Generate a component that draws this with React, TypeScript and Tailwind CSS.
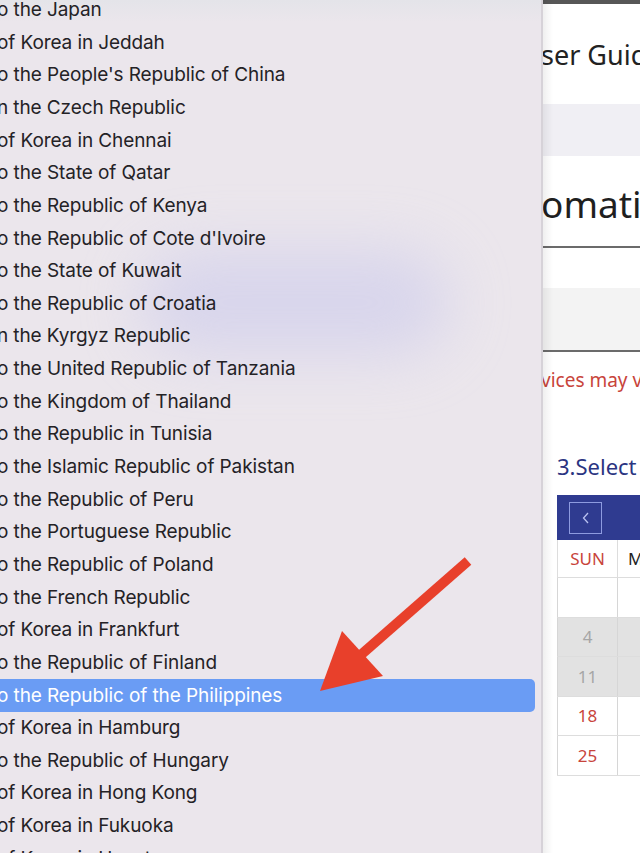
import React from "react";

const items: string[] = [
  "o the Japan",
  "of Korea in Jeddah",
  "o the People's Republic of China",
  "n the Czech Republic",
  "of Korea in Chennai",
  "o the State of Qatar",
  "o the Republic of Kenya",
  "o the Republic of Cote d'Ivoire",
  "o the State of Kuwait",
  "o the Republic of Croatia",
  "n the Kyrgyz Republic",
  "o the United Republic of Tanzania",
  "o the Kingdom of Thailand",
  "o the Republic in Tunisia",
  "o the Islamic Republic of Pakistan",
  "o the Republic of Peru",
  "o the Portuguese Republic",
  "o the Republic of Poland",
  "o the French Republic",
  "of Korea in Frankfurt",
  "o the Republic of Finland",
  "o the Republic of the Philippines",
  "of Korea in Hamburg",
  "o the Republic of Hungary",
  "of Korea in Hong Kong",
  "of Korea in Fukuoka",
  "of Korea in Houston",
];

const SELECTED = 21;

function Menu() {
  return (
    <div className="relative w-[543px] shrink-0 h-full overflow-hidden bg-[#ebe6ec] border-r-2 border-r-[#d6d2d8]">
      <div className="absolute left-[140px] top-[250px] w-[310px] h-[105px] rounded-full bg-[#c9c8ec] opacity-55 blur-[30px]" />
      <div className="absolute left-0 top-0 w-full h-[22px] bg-gradient-to-b from-[#e4e4e9] to-[#ebe6ec]" />
      <div className="relative mt-[-6px] flex flex-col">
        {items.map((t, i) => (
          <div
            key={i}
            className={
              i === SELECTED
                ? "h-[32.65px] flex items-center mr-[6px] rounded-r-[5px] bg-[#6a9cf4] text-white"
                : "h-[32.65px] flex items-center mr-[6px] text-[#242226]"
            }
          >
            <span className="ml-[-3px] whitespace-nowrap text-[19px] font-normal font-['Inter',sans-serif] tracking-[-0.1px]">
              {t}
            </span>
          </div>
        ))}
      </div>
    </div>
  );
}

function Calendar() {
  const rows = [
    { label: "", grey: false },
    { label: "4", grey: true },
    { label: "11", grey: true },
    { label: "18", grey: false },
    { label: "25", grey: false },
  ];
  return (
    <div className="ml-[14px] w-[200px]">
      <div className="h-[45px] bg-[#2f3b90] flex items-center pl-[12px]">
        <div className="w-[33px] h-[32px] border border-[#8e9be0] flex items-center justify-center">
          <svg width="12" height="14" viewBox="0 0 12 14" fill="none">
            <path d="M8 2 L3.5 7 L8 12" stroke="#b9c2f0" strokeWidth="1.3" />
          </svg>
        </div>
      </div>
      <div className="flex h-[38px] border-b border-[#dddddd]">
        <div className="w-[61px] border-l border-r border-[#dddddd] flex items-center justify-center text-[17px] text-[#c8443b] font-['Noto_Sans',sans-serif]">
          SUN
        </div>
        <div className="flex-1 flex items-center pl-[10px] text-[17px] text-[#222] font-['Noto_Sans',sans-serif]">
          MON
        </div>
      </div>
      {rows.map((r, i) => (
        <div key={i} className={"flex h-[39.5px] border-b border-[#dddddd] " + (r.grey ? "bg-[#e2e2e2]" : "bg-white")}>
          <div
            className={
              "w-[61px] border-l border-r border-[#d6d6d6] flex items-center justify-center text-[17px] font-['Noto_Sans',sans-serif] " +
              (r.grey ? "text-[#a6a6a6]" : "text-[#c8443b]")
            }
          >
            {r.label}
          </div>
          <div className="flex-1" />
        </div>
      ))}
    </div>
  );
}

function Page() {
  return (
    <div className="relative flex-1 h-full overflow-hidden bg-white font-['Noto_Sans',sans-serif]">
      <div className="h-[4px] bg-[#575757]" />
      <div className="h-[100px] flex items-center">
        <span className="whitespace-nowrap text-[27px] text-[#222] ml-[-2px] mt-[2px]">ser Guide</span>
      </div>
      <div className="h-[52px] bg-[#f0eff4]" />
      <div className="h-[92px] flex items-center border-b-2 border-[#6b6b6b]">
        <span className="whitespace-nowrap text-[37px] text-[#1f1f1f] ml-[-2px] mt-[6px]">omation</span>
      </div>
      <div className="h-[40px]" />
      <div className="h-[64px] bg-[#f3f3f3] border-b-2 border-[#6b6b6b]" />
      <div className="h-[56px] flex items-center">
        <span className="whitespace-nowrap text-[19px] text-[#c8443b] ml-[-2px]">vices may vary</span>
      </div>
      <div className="h-[87px] flex items-end pb-[12px]">
        <span className="whitespace-nowrap text-[22px] text-[#2b3582] ml-[14px]">3.Select date</span>
      </div>
      <Calendar />
      <div className="absolute left-0 top-0 h-full w-[10px] bg-gradient-to-r from-[#00000010] to-transparent" />
    </div>
  );
}

export default function App() {
  return (
    <div className="relative w-[640px] h-[853px] overflow-hidden flex bg-white">
      <Menu />
      <Page />
      <svg className="absolute left-0 top-0 pointer-events-none" width="640" height="853" viewBox="0 0 640 853">
        <line x1="468" y1="561" x2="355" y2="660" stroke="#e8402b" strokeWidth="10" strokeLinecap="butt" />
        <polygon points="320,691 342,631 383,676" fill="#e8402b" />
      </svg>
    </div>
  );
}
